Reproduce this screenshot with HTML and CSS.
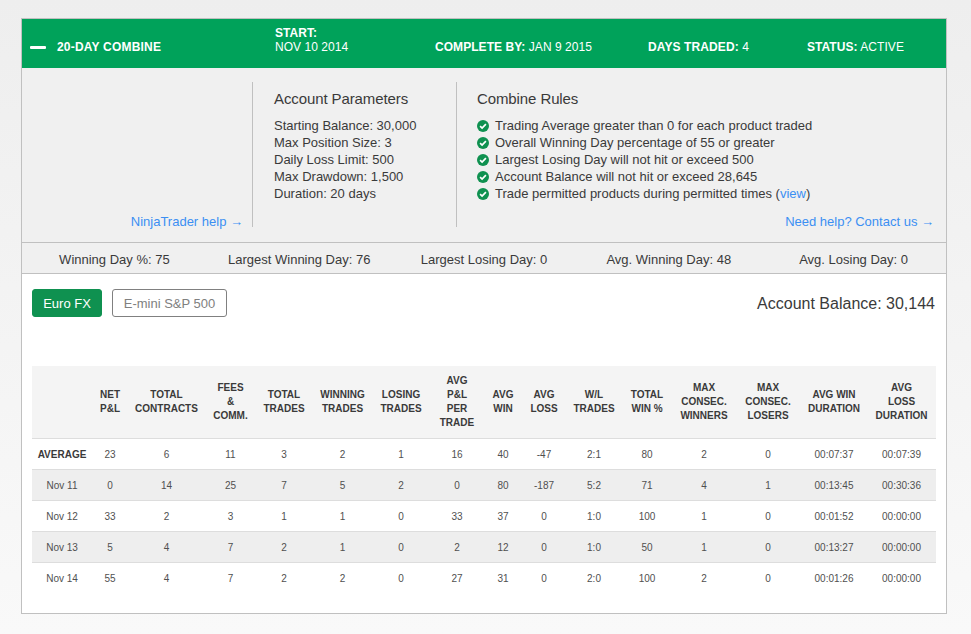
FILE: index.html
```html
<!DOCTYPE html>
<html lang="en">
<head>
  <meta charset="UTF-8" />
  <title>20-Day Combine</title>
  <meta name="viewport" content="width=device-width, initial-scale=1" />
  <link rel="stylesheet" href="styles.css">
</head>
<body>
  <svg class="defs" width="0" height="0">
    <symbol id="check" viewBox="0 0 12 12">
      <circle cx="6" cy="6" r="6" fill="#0f9150" />
      <path d="M3.1 6.2 5.1 8.1 8.9 4.2" fill="none" stroke="#fff" stroke-width="1.7" />
    </symbol>
  </svg>

  <div class="container">
    <div class="banner">
      <div class="title"><span class="minus"></span>20-DAY COMBINE</div>
      <div class="start"><b>START:</b><br>NOV 10 2014</div>
      <div class="complete"><b>COMPLETE BY:</b> JAN 9 2015</div>
      <div class="days"><b>DAYS TRADED:</b> 4</div>
      <div class="status"><b>STATUS:</b> ACTIVE</div>
    </div>

    <div class="details">
      <div class="col col-help">
        <a href="#" class="help">NinjaTrader help →</a>
      </div>
      <div class="col col-params">
        <h2>Account Parameters</h2>
        <p>Starting Balance: 30,000</p>
        <p>Max Position Size: 3</p>
        <p>Daily Loss Limit: 500</p>
        <p>Max Drawdown: 1,500</p>
        <p>Duration: 20 days</p>
      </div>
      <div class="col col-rules">
        <h2>Combine Rules</h2>
        <ul>
          <li><svg class="check"><use href="#check" /></svg>Trading Average greater than 0 for each product traded</li>
          <li><svg class="check"><use href="#check" /></svg>Overall Winning Day percentage of 55 or greater</li>
          <li><svg class="check"><use href="#check" /></svg>Largest Losing Day will not hit or exceed 500</li>
          <li><svg class="check"><use href="#check" /></svg>Account Balance will not hit or exceed 28,645</li>
          <li><svg class="check"><use href="#check" /></svg><span>Trade permitted products during permitted times (<a href="#">view</a>)</span></li>
        </ul>
        <a href="#" class="help">Need help? Contact us →</a>
      </div>
    </div>

    <div class="stats">
      <span>Winning Day %: 75</span>
      <span>Largest Winning Day: 76</span>
      <span>Largest Losing Day: 0</span>
      <span>Avg. Winning Day: 48</span>
      <span>Avg. Losing Day: 0</span>
    </div>

    <div class="products">
      <div class="tabs">
        <button class="tab active">Euro FX</button>
        <button class="tab">E-mini S&amp;P 500</button>
      </div>
      <div class="balance">Account Balance: 30,144</div>
    </div>

    <table class="results">
      <colgroup>
        <col class="w-60"><col class="w-36"><col class="w-77"><col class="w-51"><col class="w-56"><col class="w-61">
        <col class="w-56"><col class="w-56"><col class="w-36"><col class="w-46"><col class="w-54"><col class="w-52">
        <col class="w-62"><col class="w-66"><col class="w-66"><col class="w-69">
      </colgroup>
      <thead>
        <tr>
          <th></th>
          <th>NET<br>P&amp;L</th>
          <th>TOTAL<br>CONTRACTS</th>
          <th>FEES<br>&amp;<br>COMM.</th>
          <th>TOTAL<br>TRADES</th>
          <th>WINNING<br>TRADES</th>
          <th>LOSING<br>TRADES</th>
          <th>AVG<br>P&amp;L<br>PER<br>TRADE</th>
          <th>AVG<br>WIN</th>
          <th>AVG<br>LOSS</th>
          <th>W/L<br>TRADES</th>
          <th>TOTAL<br>WIN %</th>
          <th>MAX<br>CONSEC.<br>WINNERS</th>
          <th>MAX<br>CONSEC.<br>LOSERS</th>
          <th>AVG WIN<br>DURATION</th>
          <th>AVG<br>LOSS<br>DURATION</th>
        </tr>
      </thead>
      <tbody>
        <tr>
          <td class="avg">AVERAGE</td><td>23</td><td>6</td><td>11</td><td>3</td><td>2</td><td>1</td><td>16</td><td>40</td><td>-47</td><td>2:1</td><td>80</td><td>2</td><td>0</td><td>00:07:37</td><td>00:07:39</td>
        </tr>
        <tr>
          <td>Nov 11</td><td>0</td><td>14</td><td>25</td><td>7</td><td>5</td><td>2</td><td>0</td><td>80</td><td>-187</td><td>5:2</td><td>71</td><td>4</td><td>1</td><td>00:13:45</td><td>00:30:36</td>
        </tr>
        <tr>
          <td>Nov 12</td><td>33</td><td>2</td><td>3</td><td>1</td><td>1</td><td>0</td><td>33</td><td>37</td><td>0</td><td>1:0</td><td>100</td><td>1</td><td>0</td><td>00:01:52</td><td>00:00:00</td>
        </tr>
        <tr>
          <td>Nov 13</td><td>5</td><td>4</td><td>7</td><td>2</td><td>1</td><td>0</td><td>2</td><td>12</td><td>0</td><td>1:0</td><td>50</td><td>1</td><td>0</td><td>00:13:27</td><td>00:00:00</td>
        </tr>
        <tr>
          <td>Nov 14</td><td>55</td><td>4</td><td>7</td><td>2</td><td>2</td><td>0</td><td>27</td><td>31</td><td>0</td><td>2:0</td><td>100</td><td>2</td><td>0</td><td>00:01:26</td><td>00:00:00</td>
        </tr>
      </tbody>
    </table>
  </div>
</body>
</html>
```

FILE: styles.css
```css
html {
  height: 100%;
}

body {
  margin: 0;
  min-height: 100%;
  font-family: "Liberation Sans", Arial, sans-serif;
  color: #3a3a3a;
  background: linear-gradient(#eeeeee, #f9f9f9);
}

.defs {
  position: absolute;
}

a {
  color: #3b8ff3;
  text-decoration: none;
}

.container {
  width: 924px;
  height: 594px;
  margin: 18px 0 0 21px;
  border: 1px solid #c0c0c0;
  background-color: white;
}

.banner {
  display: flex;
  align-items: flex-end;
  height: 49px;
  padding-bottom: 14px;
  box-sizing: border-box;
  background-color: #00a25a;
  color: white;
  font-size: 12px;
  line-height: 14px;
  letter-spacing: 0.05px;
}

.title {
  display: flex;
  align-items: center;
  width: 253px;
  padding-left: 8px;
  box-sizing: border-box;
  font-weight: bold;
  letter-spacing: 0.2px;
}

.minus {
  width: 16px;
  height: 3px;
  margin-right: 11px;
  border-radius: 1px;
  background-color: white;
}

.start {
  width: 160px;
}

.complete {
  width: 213px;
}

.days {
  width: 159px;
  letter-spacing: 0.1px;
}

.status {
  width: 120px;
}

.details {
  display: flex;
  height: 174px;
  padding-top: 14px;
  box-sizing: border-box;
  background-color: #f0f0f0;
  font-size: 13px;
  line-height: 17px;
}

.col {
  height: 145px;
  box-sizing: border-box;
}

.col-help {
  display: flex;
  align-items: flex-end;
  justify-content: flex-end;
  width: 231px;
  padding-right: 9px;
  border-right: 1px solid #c0c0c0;
}

.col-help .help {
  line-height: 11px;
}

.col-params {
  width: 204px;
  padding-left: 21px;
  border-right: 1px solid #c0c0c0;
}

.col-rules {
  flex: 1;
  padding: 0 12px 0 20px;
}

.col h2 {
  margin: 8px 0 10px;
  font-size: 15px;
  font-weight: normal;
  line-height: 17px;
  letter-spacing: -0.1px;
}

.col p {
  margin: 0;
}

.col ul {
  margin: 0;
  padding: 0;
  list-style: none;
}

.col li {
  display: flex;
  align-items: center;
}

.check {
  width: 12px;
  height: 12px;
  margin-right: 6px;
  flex: none;
}

.col-rules .help {
  display: block;
  margin-top: 11px;
  text-align: right;
}

.stats {
  display: flex;
  height: 32px;
  padding-top: 2px;
  box-sizing: border-box;
  align-items: center;
  border-top: 1px solid #c0c0c0;
  border-bottom: 1px solid #c0c0c0;
  background-color: #f0f0f0;
  font-size: 13px;
}

.stats span {
  flex: 1;
  text-align: center;
}

.products {
  display: flex;
  justify-content: space-between;
  height: 92px;
  padding: 15px 11px 0 10px;
  box-sizing: border-box;
}

.tabs {
  display: flex;
  align-items: flex-start;
  gap: 10px;
}

.tab {
  width: 115px;
  height: 28px;
  padding: 0;
  border: 1px solid #808080;
  border-radius: 3px;
  background-color: white;
  color: #808080;
  font-family: inherit;
  font-size: 13px;
}

.tab.active {
  width: 70px;
  border-color: #0f9150;
  background-color: #0f9150;
  color: white;
}

.balance {
  margin-top: 5px;
  font-size: 16px;
  line-height: 20px;
}

.results {
  width: 904px;
  margin-left: 10px;
  table-layout: fixed;
  border-collapse: collapse;
  text-align: center;
}

.w-60 { width: 60px; }
.w-36 { width: 36px; }
.w-77 { width: 77px; }
.w-51 { width: 51px; }
.w-56 { width: 56px; }
.w-61 { width: 61px; }
.w-46 { width: 46px; }
.w-54 { width: 54px; }
.w-52 { width: 52px; }
.w-62 { width: 62px; }
.w-66 { width: 66px; }
.w-69 { width: 69px; }

.results th {
  height: 72px;
  padding: 0;
  background-color: #f4f4f4;
  border-bottom: 1px solid #dddddd;
  font-size: 10px;
  line-height: 14px;
  font-weight: bold;
  white-space: nowrap;
}

.results td {
  height: 30px;
  padding: 0;
  border-bottom: 1px solid #dddddd;
  font-size: 10px;
  color: #505050;
}

.results tbody tr:nth-child(even) td {
  background-color: #eeeeee;
}

.results tbody tr:last-child td {
  border-bottom: none;
}

.results td.avg {
  font-weight: bold;
  color: #3a3a3a;
}
```
